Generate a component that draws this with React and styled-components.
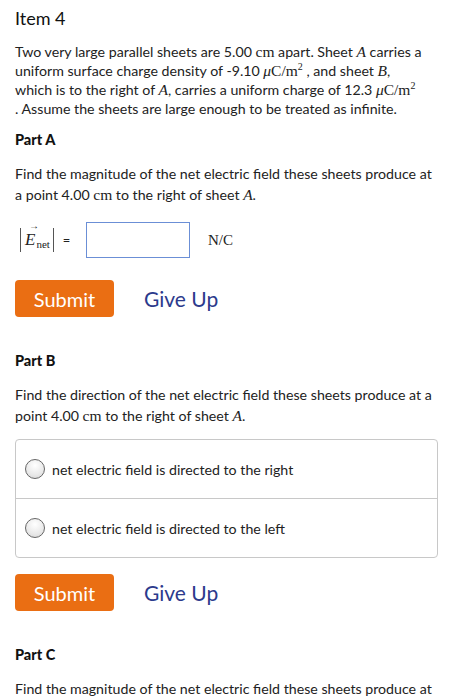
import React from 'react'
import styled, { createGlobalStyle } from 'styled-components'

const GlobalStyle = createGlobalStyle`
  body {
    margin: 0;
    background: #fff;
    font-family: "Lato", "Open Sans", sans-serif;
    color: #222;
  }
`

const Page = styled.div`
  padding: 6px 15px 0 15px;
  width: 452px;
  box-sizing: border-box;
  overflow: hidden;
  height: 700px;
`

const Title = styled.h1`
  font-size: 18px;
  font-weight: 400;
  margin: 0 0 12px 0;
  line-height: 24px;
  color: #111;
`

const Text = styled.p`
  font-size: 14.2px;
  line-height: ${(p) => p.lh || 19}px;
  margin: 0;
  color: #222;
`

const Line = styled.span`
  display: block;
  white-space: nowrap;
`

const M = styled.span`
  font-family: "Liberation Serif", serif;
  font-size: 15.5px;
  font-style: ${(p) => (p.i ? 'italic' : 'normal')};
`

const Sup = styled.sup`
  font-family: "Liberation Serif", serif;
  font-size: 10px;
  line-height: 0;
`

const PartTitle = styled.h2`
  font-size: 14.5px;
  font-weight: 900;
  margin: ${(p) => p.top || 20}px 0 ${(p) => p.bottom || 14}px 0;
  line-height: 18px;
  color: #111;
`

const AnswerRow = styled.div`
  display: flex;
  align-items: center;
  margin-top: 17px;
  height: 36px;
`

const Label = styled.span`
  font-family: "Liberation Serif", serif;
  font-size: 17px;
  display: inline-flex;
  align-items: center;
  gap: 1px;
  width: 71px;
  padding-left: 5px;
  box-sizing: border-box;
`

const Bar = styled.span`
  display: inline-block;
  width: 1px;
  height: 24px;
  background: #555;
`

const Arrowed = styled.span`
  font-style: italic;
  position: relative;
  margin-left: 3px;
`

const Arrow = styled.span`
  position: absolute;
  left: 4px;
  top: -10px;
  font-size: 10px;
  font-style: normal;
`

const Sub = styled.span`
  font-size: 11px;
  margin-top: 8px;
  margin-right: 2px;
`

const Eq = styled.span`
  font-family: "Lato", sans-serif;
  font-size: 13px;
  margin-left: 8px;
`

const Input = styled.div`
  width: 104px;
  height: 36px;
  box-sizing: border-box;
  border: 1px solid #6b8fd6;
`

const Unit = styled.span`
  font-family: "Liberation Serif", serif;
  font-size: 15px;
  margin-left: 18px;
`

const Actions = styled.div`
  display: flex;
  align-items: center;
  gap: 30px;
  margin-top: ${(p) => p.top || 22}px;
`

const SubmitButton = styled.button`
  width: 99px;
  height: 37px;
  border: none;
  border-radius: 4px;
  background: #ea6e13;
  color: #fff;
  font-family: inherit;
  font-size: 20px;
  padding: 0;
`

const GiveUp = styled.span`
  color: #2c3a8c;
  font-size: 21px;
`

const Options = styled.div`
  margin-top: 13px;
  border: 1px solid #c8c8c8;
  border-radius: 4px;
  width: 421px;
`

const Option = styled.div`
  display: flex;
  align-items: center;
  gap: 7px;
  height: 58px;
  padding: 0 0 0 9px;
  font-size: 14.2px;
  & + & {
    border-top: 1px solid #c8c8c8;
  }
`

const Radio = styled.span`
  width: 18px;
  height: 18px;
  border-radius: 50%;
  border: 1px solid #666;
  background: radial-gradient(circle at 50% 30%, #fff 0%, #e9e9e9 60%, #d4d4d4 100%);
  flex-shrink: 0;
`

const Enet = () => (
  <Label>
    <Bar />
    <Arrowed>
      E<Arrow>→</Arrow>
    </Arrowed>
    <Sub>net</Sub>
    <Bar />
    <Eq>=</Eq>
  </Label>
)

const Buttons = ({ top }) => (
  <Actions top={top}>
    <SubmitButton>Submit</SubmitButton>
    <GiveUp>Give Up</GiveUp>
  </Actions>
)

const Unit2 = () => (
  <>
    <M><M i>μ</M>C/m</M>
    <Sup>2</Sup>
  </>
)

export default function App() {
  return (
    <>
      <GlobalStyle />
      <Page>
        <Title>Item 4</Title>
        <Text>
          <Line>Two very large parallel sheets are 5.00 <M>cm</M> apart. Sheet <M i>A</M> carries a</Line>
          <Line>uniform surface charge density of -9.10 <Unit2 /> , and sheet <M i>B</M>,</Line>
          <Line>which is to the right of <M i>A</M>, carries a uniform charge of 12.3 <Unit2 /></Line>
          <Line>. Assume the sheets are large enough to be treated as infinite.</Line>
        </Text>

        <PartTitle top={13}>Part A</PartTitle>
        <Text lh={21}>
          <Line>Find the magnitude of the net electric field these sheets produce at</Line>
          <Line>a point 4.00 <M>cm</M> to the right of sheet <M i>A</M>.</Line>
        </Text>
        <AnswerRow>
          <Enet />
          <Input />
          <Unit>N/C</Unit>
        </AnswerRow>
        <Buttons top={22} />

        <PartTitle top={35}>Part B</PartTitle>
        <Text lh={21}>
          <Line>Find the direction of the net electric field these sheets produce at a</Line>
          <Line>point 4.00 <M>cm</M> to the right of sheet <M i>A</M>.</Line>
        </Text>
        <Options>
          <Option>
            <Radio />
            net electric field is directed to the right
          </Option>
          <Option>
            <Radio />
            net electric field is directed to the left
          </Option>
        </Options>
        <Buttons top={16} />

        <PartTitle top={35}>Part C</PartTitle>
        <Text lh={21}>
          <Line>Find the magnitude of the net electric field these sheets produce at</Line>
          <Line>a point 4.00 <M>cm</M> to the right of sheet <M i>A</M>.</Line>
        </Text>
      </Page>
    </>
  )
}
